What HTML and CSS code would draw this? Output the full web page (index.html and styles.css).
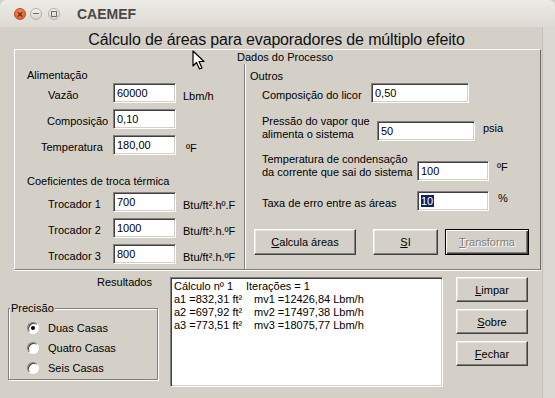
FILE: index.html
```html
<!DOCTYPE html>
<html lang="pt-BR">
<head>
    <meta charset="UTF-8">
    <meta name="viewport" content="width=device-width, initial-scale=1.0">
    <title>CAEMEF</title>
    <link rel="stylesheet" href="styles.css">
</head>
<body>

<div class="window">
    <div class="titlebar">
        <span class="wm-btn wm-close">&#215;</span>
        <span class="wm-btn wm-min"><span class="wm-dash"></span></span>
        <span class="wm-btn wm-max"><span class="wm-square"></span></span>
        <span class="wm-title">CAEMEF</span>
    </div>

    <div class="client">
        <div class="form">
            <h1 class="heading">Cálculo de áreas para evaporadores de múltiplo efeito</h1>

            <!-- Dados do Processo -->
            <div class="panel">
                <div class="panel-caption">Dados do Processo</div>
                <div class="panel-body">
                    <div class="col-left">
                        <div class="section-title">Alimentação</div>
                        <div class="row first">
                            <span class="lbl pad-33">Vazão</span>
                            <div class="edit w63">60000</div>
                            <span class="unit">Lbm/h</span>
                        </div>
                        <div class="row">
                            <span class="lbl pad-32">Composição</span>
                            <div class="edit w63">0,10</div>
                        </div>
                        <div class="row">
                            <span class="lbl pad-26">Temperatura</span>
                            <div class="edit w63">180,00</div>
                            <span class="unit unit-wide">ºF</span>
                        </div>

                        <div class="section-title coef">Coeficientes de troca térmica</div>
                        <div class="row first">
                            <span class="lbl pad-33">Trocador 1</span>
                            <div class="edit w63">700</div>
                            <span class="unit">Btu/ft².hº.F</span>
                        </div>
                        <div class="row">
                            <span class="lbl pad-33">Trocador 2</span>
                            <div class="edit w63">1000</div>
                            <span class="unit">Btu/ft².h.ºF</span>
                        </div>
                        <div class="row">
                            <span class="lbl pad-33">Trocador 3</span>
                            <div class="edit w63">800</div>
                            <span class="unit">Btu/ft².h.ºF</span>
                        </div>
                    </div>

                    <div class="col-right">
                        <div class="section-title outros">Outros</div>
                        <div class="orow">
                            <span class="olbl w109">Composição do licor</span>
                            <div class="edit w98">0,50</div>
                        </div>
                        <div class="orow tall">
                            <span class="olbl w115">Pressão do vapor que<br>alimenta o sistema</span>
                            <div class="edit w98 low6">50</div>
                            <span class="ounit psia">psia</span>
                        </div>
                        <div class="orow tall">
                            <span class="olbl w155">Temperatura de condensação<br>da corrente que sai do sistema</span>
                            <div class="edit w72 low8">100</div>
                            <span class="ounit degf">ºF</span>
                        </div>
                        <div class="orow">
                            <span class="olbl w155 single">Taxa de erro entre as áreas</span>
                            <div class="edit w72"><span class="selected">10</span></div>
                            <span class="ounit pct">%</span>
                        </div>
                        <div class="button-row">
                            <button class="btn btn-calc"><u>C</u>alcula áreas</button>
                            <button class="btn btn-si"><u>S</u>I</button>
                            <button class="btn btn-default btn-disabled"><u>T</u>ransforma</button>
                        </div>
                    </div>
                </div>
            </div>

            <!-- Resultados -->
            <div class="bottom">
                <div class="bottom-left">
                    <div class="results-label">Resultados</div>
                    <div class="groupbox">
                        <span class="group-caption">Precisão</span>
                        <div class="radio-row first"><span class="radio checked"></span>Duas Casas</div>
                        <div class="radio-row"><span class="radio"></span>Quatro Casas</div>
                        <div class="radio-row"><span class="radio"></span>Seis Casas</div>
                    </div>
                </div>

                <div class="memo">
                    <div class="memo-line"><span class="c1">Cálculo nº 1</span>Iterações = 1</div>
                    <div class="memo-line"><span class="c2">a1 =832,31 ft²</span>mv1 =12426,84 Lbm/h</div>
                    <div class="memo-line"><span class="c2">a2 =697,92 ft²</span>mv2 =17497,38 Lbm/h</div>
                    <div class="memo-line"><span class="c2">a3 =773,51 ft²</span>mv3 =18075,77 Lbm/h</div>
                </div>

                <div class="side-buttons">
                    <button class="btn btn-side"><u>L</u>impar</button>
                    <button class="btn btn-side"><u>S</u>obre</button>
                    <button class="btn btn-side"><u>F</u>echar</button>
                </div>
            </div>
        </div>
        <div class="edge"></div>
    </div>

    <!-- ponteiro do mouse -->
    <svg class="cursor" width="16" height="20" viewBox="0 0 16 20">
        <path d="M1 1 L1 16 L4.5 12.5 L7.5 19 L10 18 L7 11.5 L12 11.5 Z" fill="#fff" stroke="#000" stroke-width="1.2" stroke-linejoin="round"/>
    </svg>
</div>

</body>
</html>
```

FILE: styles.css
```css
html, body {
    margin: 0;
    padding: 0;
}
body {
    background-color: #d4d0c8;
    font-family: 'Liberation Sans', Arial, sans-serif;
    font-size: 11px;
    color: #000;
}
.window {
    position: relative;
    width: 555px;
    height: 398px;
    display: flex;
    flex-direction: column;
    overflow: hidden;
}

/* barra de título */
.titlebar {
    height: 27px;
    display: flex;
    align-items: center;
    background: linear-gradient(#edebe7, #dddad4);
    border-radius: 6px 6px 0 0;
    flex-shrink: 0;
}
.wm-btn {
    width: 12px;
    height: 12px;
    border-radius: 50%;
    display: flex;
    align-items: center;
    justify-content: center;
    box-sizing: border-box;
}
.wm-close {
    margin-left: 14px;
    background: radial-gradient(circle at 50% 35%, #f5905f, #e2531f);
    border: 1px solid #c8481d;
    color: #6a2710;
    font-size: 11px;
    font-weight: bold;
    line-height: 10px;
}
.wm-min {
    margin-left: 4px;
    background: linear-gradient(#f2f1ee, #d6d4cf);
    border: 1px solid #b3b0aa;
}
.wm-max {
    margin-left: 6px;
    background: linear-gradient(#f2f1ee, #d6d4cf);
    border: 1px solid #b3b0aa;
}
.wm-dash {
    width: 6px;
    height: 1px;
    background-color: #6d6b66;
}
.wm-square {
    width: 4px;
    height: 4px;
    border: 1px solid #6d6b66;
}
.wm-title {
    margin-left: 17px;
    font-size: 14px;
    font-weight: bold;
    color: #4a4946;
}

.client {
    flex: 1;
    display: flex;
}
.form {
    width: 542px;
    display: flex;
    flex-direction: column;
}
.edge {
    flex: 1;
    background-color: #dad8d3;
    border-left: 1px solid #c4c1ba;
}

.heading {
    margin: 4px 0 0;
    padding-left: 11px;
    font-size: 16px;
    font-weight: normal;
    line-height: 18px;
    letter-spacing: -0.15px;
    text-align: center;
    color: #111;
}

/* painel Dados do Processo */
.panel {
    margin-left: 14px;
    width: 527px;
    height: 221px;
    box-sizing: border-box;
    border: 1px solid;
    border-color: #fff #6f6d68 #808080 #fff;
    box-shadow: 0 1px 0 #fff;
    display: flex;
    flex-direction: column;
}
.panel-caption {
    height: 14px;
    line-height: 14px;
    padding-left: 15px;
    text-align: center;
}
.panel-body {
    flex: 1;
    display: flex;
}
.col-left {
    width: 229px;
    padding-top: 4px;
}
.col-right {
    flex: 1;
    border-left: 1px solid #808080;
    box-shadow: inset 1px 0 0 #fff;
}
.section-title {
    line-height: 14px;
    padding-left: 12px;
}
.section-title.coef {
    margin-top: 19px;
    margin-bottom: 4px;
}
.section-title.outros {
    padding-left: 5px;
    margin-top: 5px;
}

.row {
    display: flex;
    align-items: flex-start;
    height: 20px;
    margin-top: 6px;
}
.row.first {
    margin-top: 1px;
}
.lbl {
    width: 98px;
    box-sizing: border-box;
    padding-top: 5px;
    line-height: 14px;
    white-space: nowrap;
}
.pad-33 { padding-left: 33px; }
.pad-32 { padding-left: 32px; }
.pad-26 { padding-left: 26px; }
.unit {
    margin-left: 7px;
    padding-top: 6px;
    line-height: 14px;
    white-space: nowrap;
}
.unit-wide {
    margin-left: 10px;
}

/* caixa de texto afundada */
.edit {
    height: 20px;
    box-sizing: border-box;
    background-color: #fff;
    border: 1px solid;
    border-color: #808080 #fff #fff #808080;
    box-shadow: inset 1px 1px 0 #404040, inset -1px -1px 0 #d4d0c8;
    padding: 2px 0 0 3px;
    line-height: 14px;
    white-space: nowrap;
}
.w63 { width: 63px; }
.w72 { width: 72px; }
.w98 { width: 98px; }
.low6 { margin-top: 6px; }
.low8 { margin-top: 8px; }
.selected {
    background-color: #0a246a;
    color: #fff;
    padding-right: 1px;
}

.orow {
    display: flex;
    align-items: flex-start;
    padding-left: 17px;
    margin-top: 12px;
}
.section-title.outros + .orow {
    margin-top: 0;
}
.orow.tall {
    height: 26px;
}
.olbl {
    line-height: 13px;
    white-space: nowrap;
}
.olbl.single {
    padding-top: 5px;
    line-height: 14px;
}
.w109 { width: 109px; padding-top: 5px; line-height: 14px; }
.w115 { width: 115px; }
.w155 { width: 155px; }
.ounit {
    line-height: 14px;
}
.psia { margin-left: 8px; margin-top: 6px; }
.degf { margin-left: 8px; margin-top: 7px; }
.pct { margin-left: 9px; }

/* botões estilo clássico */
.btn {
    font-family: 'Liberation Sans', Arial, sans-serif;
    font-size: 11px;
    color: #000;
    background-color: #d4d0c8;
    border: 1px solid;
    border-color: #fff #404040 #404040 #fff;
    box-shadow: inset -1px -1px 0 #808080, inset 1px 1px 0 #e8e6e1;
    padding: 0;
    height: 26px;
    box-sizing: border-box;
    cursor: pointer;
}
.button-row {
    display: flex;
    margin-top: 18px;
    padding-left: 9px;
}
.btn-calc { width: 102px; }
.btn-si { width: 65px; margin-left: 17px; }
.btn-default {
    width: 84px;
    margin-left: 7px;
    border: 1px solid #000;
    box-shadow: inset 1px 1px 0 #fff, inset -1px -1px 0 #404040, inset -2px -2px 0 #808080;
}
.btn-disabled {
    color: #808080;
    text-shadow: 1px 1px 0 #fff;
}

/* parte de baixo */
.bottom {
    display: flex;
    padding-left: 8px;
}
.bottom-left {
    width: 150px;
}
.results-label {
    margin-top: 5px;
    line-height: 14px;
    text-align: right;
    padding-right: 6px;
}
.groupbox {
    margin-top: 19px;
    height: 72px;
    box-sizing: border-box;
    border: 1px solid #808080;
    box-shadow: inset 1px 1px 0 #fff, 1px 1px 0 #fff;
}
.group-caption {
    display: block;
    width: fit-content;
    margin: -7px 0 0 1px;
    padding: 0 1px;
    line-height: 13px;
    background-color: #d4d0c8;
}
.radio-row {
    display: flex;
    align-items: center;
    height: 20px;
    padding-left: 18px;
}
.radio-row.first {
    margin-top: 3px;
}
.radio {
    width: 12px;
    height: 12px;
    box-sizing: border-box;
    border-radius: 50%;
    background-color: #fff;
    border: 1px solid;
    border-color: #808080 #fff #fff #808080;
    box-shadow: inset 1px 1px 0 #404040;
    margin-right: 9px;
    display: flex;
    align-items: center;
    justify-content: center;
}
.radio.checked::after {
    content: "";
    width: 4px;
    height: 4px;
    border-radius: 50%;
    background-color: #000;
}

.memo {
    margin: 7px 0 0 12px;
    width: 273px;
    height: 110px;
    box-sizing: border-box;
    background-color: #fff;
    border: 1px solid;
    border-color: #808080 #fff #fff #808080;
    box-shadow: inset 1px 1px 0 #404040, inset -1px -1px 0 #d4d0c8;
    padding: 2px 0 0 3px;
}
.memo-line {
    line-height: 13px;
    white-space: nowrap;
}
.c1 {
    display: inline-block;
    width: 72px;
}
.c2 {
    display: inline-block;
    width: 80px;
}

.side-buttons {
    margin: 7px 0 0 13px;
    display: flex;
    flex-direction: column;
    gap: 7px;
}
.btn-side {
    width: 72px;
    height: 25px;
}

.cursor {
    position: absolute;
    left: 192px;
    top: 50px;
}
```
